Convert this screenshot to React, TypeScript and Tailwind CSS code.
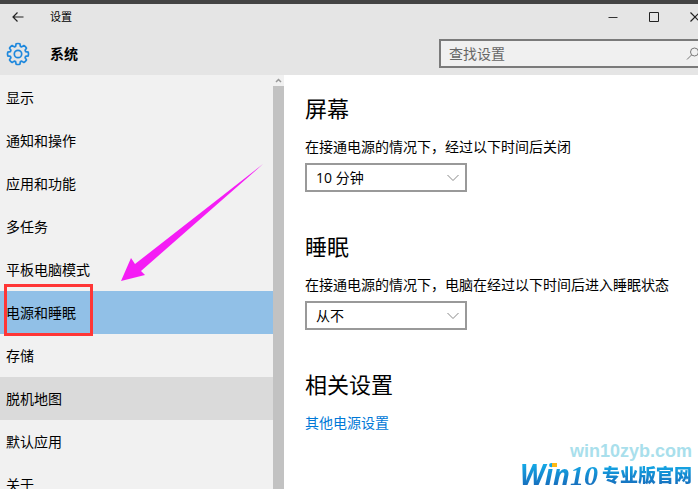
import React, { useState } from 'react';
import clsx from 'clsx';

const navItems = [
  '显示',
  '通知和操作',
  '应用和功能',
  '多任务',
  '平板电脑模式',
  '电源和睡眠',
  '存储',
  '脱机地图',
  '默认应用',
  '关于',
];

const highlighted = '脱机地图';

const GearIcon = () => (
  <svg viewBox="0 0 24 24" className="h-6 w-6" fill="none" stroke="#1e88dd" strokeWidth="1.7" strokeLinejoin="round">
    <path d="M9.6 4.4 10.1 1.8Q12 1.2 13.9 1.8L14.4 4.4 15.7 4.9 17.9 3.5Q19.6 4.4 20.5 6.1L19.1 8.3 19.6 9.6 22.2 10.1Q22.8 12 22.2 13.9L19.6 14.4 19.1 15.7 20.5 17.9Q19.6 19.6 17.9 20.5L15.7 19.1 14.4 19.6 13.9 22.2Q12 22.8 10.1 22.2L9.6 19.6 8.3 19.1 6.1 20.5Q4.4 19.6 3.5 17.9L4.9 15.7 4.4 14.4 1.8 13.9Q1.2 12 1.8 10.1L4.4 9.6 4.9 8.3 3.5 6.1Q4.4 4.4 6.1 3.5L8.3 4.9z" />
    <circle cx="12" cy="12" r="3.7" />
  </svg>
);

const TitleBar = () => (
  <div className="mb-0.5 flex h-[26px] items-center">
    <button aria-label="返回" className="flex w-9 justify-center">
      <svg viewBox="0 0 12 12" className="h-3 w-3" fill="none" stroke="#222" strokeWidth="1.2">
        <path d="M11.5 6H1M5.5 1.5 1 6l4.5 4.5" />
      </svg>
    </button>
    <span className="ml-3.5 flex-1 text-[11px]">设置</span>
    <div className="-mr-[17px] flex shrink-0">
      <button aria-label="最小化" className="flex w-[41px] justify-center">
        <svg viewBox="0 0 12 12" className="h-3 w-3" stroke="#333"><path d="M1.5 6.5h9" /></svg>
      </button>
      <button aria-label="最大化" className="flex w-[41px] justify-center">
        <svg viewBox="0 0 12 12" className="h-3 w-3" fill="none" stroke="#222"><path d="M1.5 1.5h9v9h-9z" /></svg>
      </button>
      <button aria-label="关闭" className="flex w-[41px] justify-center">
        <svg viewBox="0 0 12 12" className="h-3 w-3" stroke="#222" strokeWidth="1.2"><path d="m1.5 1.5 9 9m0-9-9 9" /></svg>
      </button>
    </div>
  </div>
);

interface TimeoutSectionProps {
  id: string;
  title: string;
  label: string;
  options: string[];
}

const TimeoutSection: React.FC<TimeoutSectionProps> = ({ id, title, label, options }) => {
  const [value, setValue] = useState(options[0]);

  return (
    <section className="mb-10">
      <h2 className="text-[22px] leading-7">{title}</h2>
      <label htmlFor={id} className="mt-[15px] block leading-5 whitespace-nowrap">{label}</label>
      <div className="relative mt-1.5 w-[162px]">
        <select
          id={id}
          value={value}
          onChange={(e) => setValue(e.target.value)}
          className="block h-[29px] w-full appearance-none border-2 border-[#999] bg-white pl-[9px]"
        >
          {options.map((option) => (
            <option key={option}>{option}</option>
          ))}
        </select>
        <svg viewBox="0 0 12 8" className="pointer-events-none absolute top-[11px] right-2 h-2 w-3" fill="none" stroke="#888">
          <path d="m.5 1 5.5 5.5L11.5 1" />
        </svg>
      </div>
    </section>
  );
};

const Watermark = () => (
  <div className="absolute right-1.5 bottom-0 flex flex-col items-end whitespace-nowrap">
    <span className="font-['Liberation_Sans',sans-serif] text-[18px] leading-5 font-bold text-[#a9dfec]">win10zyb.com</span>
    <div className="flex h-7 items-center gap-1 font-bold">
      <span className="relative bg-linear-to-b from-[#14b4ee] to-[#1763b5] bg-clip-text pl-1 text-[28px] leading-7 text-transparent italic">
        Win<span className="font-['Liberation_Serif',serif]">10</span>
        <span className="absolute top-[3px] left-9 h-1 w-[5px] bg-[#fdb813]" />
      </span>
      <span className="bg-linear-to-b from-[#14b4ee] to-[#1763b5] bg-clip-text text-[18px] leading-7 font-black text-transparent">专业版官网</span>
    </div>
  </div>
);

const App = () => {
  const [selected, setSelected] = useState('电源和睡眠');

  return (
    <div className="relative flex h-screen flex-col overflow-hidden bg-white font-['Open_Sans','Noto_Sans_CJK_SC',sans-serif] text-[14px] text-black">
      <header className="shrink-0 overflow-hidden border-t-4 border-[#444] bg-[#e5e5e5]">
        <TitleBar />
        <div className="flex h-[43px] items-center pl-1.5">
          <GearIcon />
          <h1 className="ml-5 flex-1 font-bold">系统</h1>
          <div className="relative -mr-2 w-[267px]">
            <input
              type="search"
              aria-label="查找设置"
              placeholder="查找设置"
              className="block h-[29px] w-full border-2 border-[#7a7a7a] bg-[#f0f0f0] pl-2 placeholder:text-[#666]"
            />
            <svg viewBox="0 0 14 14" className="absolute top-2 right-1.5 h-3.5 w-3.5" fill="none" stroke="#777">
              <circle cx="8.5" cy="5" r="4" />
              <path d="M5.5 8 1 12.5" />
            </svg>
          </div>
        </div>
      </header>

      <div className="flex min-h-0 flex-1">
        <nav className="flex w-[284px] shrink-0 bg-[#f1f1f1]">
          <ul className="flex-1 overflow-hidden pt-px">
            {navItems.map((item) => (
              <li key={item}>
                <button
                  onClick={() => setSelected(item)}
                  className={clsx(
                    'relative block h-[43px] w-full pl-1.5 text-left',
                    item === selected && 'bg-[#91c0e7]',
                    item === highlighted && 'bg-[#dadada]',
                  )}
                >
                  {item}
                  {item === selected && (
                    <span className="absolute -top-[7px] left-1 h-[52px] w-[89px] border-3 border-[#ff3636]" />
                  )}
                </button>
              </li>
            ))}
          </ul>
          {/* Scrollbar */}
          <div className="flex w-[11px] flex-col">
            <svg viewBox="0 0 11 11" className="h-[11px]" fill="none" stroke="#999" strokeWidth="1.5">
              <path d="m3 7 2.5-2.5L8 7" />
            </svg>
            <div className="flex-1 bg-[#c2c2c2]" />
          </div>
        </nav>

        <main className="min-w-0 flex-1 overflow-hidden pt-[19px] pl-[21px]">
          <TimeoutSection
            id="screen-timeout"
            title="屏幕"
            label="在接通电源的情况下，经过以下时间后关闭"
            options={['10 分钟', '15 分钟', '30 分钟', '从不']}
          />
          <TimeoutSection
            id="sleep-timeout"
            title="睡眠"
            label="在接通电源的情况下，电脑在经过以下时间后进入睡眠状态"
            options={['从不', '10 分钟', '15 分钟', '30 分钟']}
          />
          <section>
            <h2 className="text-[22px] leading-7">相关设置</h2>
            <a href="#power" className="mt-[15px] block leading-5 text-[#0078d7]">其他电源设置</a>
          </section>
        </main>
      </div>

      {/* Arrow pointing at the selected entry */}
      <svg viewBox="0 0 144 119" className="pointer-events-none absolute top-[163px] left-[120px] h-[119px] w-36" fill="#f51df5">
        <path d="M1 118 11 95l4 6L143 1 21 108l4 4z" />
      </svg>
      <Watermark />
    </div>
  );
};

export default App;
